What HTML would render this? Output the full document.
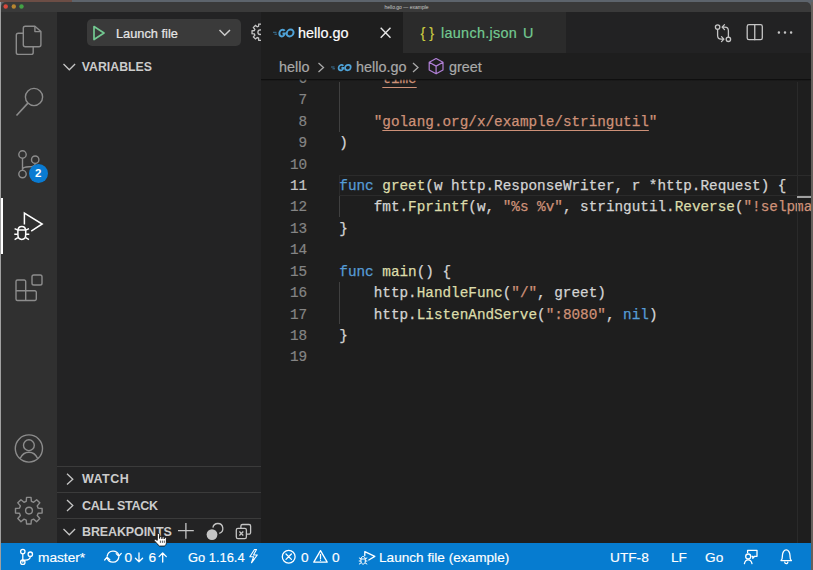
<!DOCTYPE html>
<html><head><meta charset="utf-8">
<style>
*{margin:0;padding:0;box-sizing:border-box}
html,body{width:813px;height:570px;overflow:hidden;background:#5d646c;font-family:"Liberation Sans",sans-serif;position:relative}
.a{position:absolute}
.mono{font-family:"Liberation Mono",monospace}
.code{position:absolute;left:78.3px;-webkit-text-stroke:0.25px currentColor;font-size:14.33px;line-height:21.42px;white-space:pre;color:#d4d4d4}
.ln{position:absolute;left:0;-webkit-text-stroke:0.2px currentColor;width:46.2px;text-align:right;font-size:14.33px;line-height:21.42px;color:#858585}
.k{color:#569cd6}.f{color:#dcdcaa}.s{color:#ce9178}
.u{text-decoration:underline;text-decoration-color:#ce9178;text-underline-offset:3.5px}
.hdr{position:absolute;left:82px;font-size:12.5px;font-weight:bold;color:#cccccc;line-height:14px;white-space:nowrap}
.sep{position:absolute;left:57px;width:204px;height:1px;background:#3b3b3b}
svg{position:absolute;overflow:visible}
.st{position:absolute;top:543.5px;line-height:27px;font-size:13.7px;white-space:nowrap;color:#fff;-webkit-text-stroke:0.15px currentColor}
.ui{position:absolute;font-size:14.4px;line-height:16px;white-space:nowrap;-webkit-text-stroke:0.2px currentColor}
</style></head><body>
<!-- desktop edges -->
<div class="a" style="left:0;top:0;width:72px;height:2px;background:#6c4d45"></div>
<div class="a" style="left:0;top:2px;width:1px;height:568px;background:#a0a0a0"></div>
<div class="a" style="left:811px;top:2px;width:2px;height:568px;background:#66605c"></div>

<!-- title bar -->
<div class="a" style="left:1px;top:2px;width:810px;height:10px;background:#3a3a3a;border-radius:5px 5px 0 0"></div>
<div class="a" style="left:1px;top:1.5px;width:811px;height:10px;color:#c8c8c8;font-size:5px;line-height:10px;text-align:center">hello.go — example</div>
<svg style="left:0;top:0" width="30" height="12">
 <circle cx="5.7" cy="6.5" r="2.2" fill="#d8483c"/><circle cx="13.8" cy="6.5" r="2.2" fill="#b88530"/><circle cx="21.5" cy="6.5" r="2.2" fill="#43a045"/>
</svg>

<!-- regions -->
<div class="a" style="left:1px;top:12px;width:56px;height:531px;background:#303030"></div>
<div class="a" style="left:57px;top:12px;width:204px;height:531px;background:#232324"></div>
<div class="a" style="left:261px;top:12px;width:550px;height:531px;background:#1e1e1e"></div>
<div class="a" style="left:261px;top:12px;width:550px;height:41px;background:#222223"></div>
<div class="a" style="left:261px;top:12px;width:142px;height:41px;background:#1e1e1e"></div>
<div class="a" style="left:403px;top:12px;width:163px;height:41px;background:#2b2b2b"></div>

<!-- activity bar icons -->
<svg style="left:0;top:0" width="60" height="545" fill="none" stroke="#8c8c8c" stroke-width="1.4" stroke-linejoin="round">
 <!-- files -->
 <path d="M23.3 28.3 a2 2 0 0 1 2 -2 h9.6 l6 5.3 v13.1 a2 2 0 0 1 -2 2 h-13.6 a2 2 0 0 1 -2 -2 z"/>
 <path d="M34.9 26.3 v5.3 h6"/>
 <path d="M23.3 33.3 h-5 a2 2 0 0 0 -2 2 v17.1 a2 2 0 0 0 2 2 h12.9 a2 2 0 0 0 2 -2 v-5.7"/>
 <!-- search -->
 <circle cx="34" cy="97" r="8.6"/>
 <path d="M27.9 103.1 L16.5 115.5" stroke-width="1.6"/>
 <!-- scm -->
 <circle cx="22.5" cy="154.5" r="3.7"/><circle cx="22.5" cy="174.1" r="3.7"/><circle cx="35.2" cy="159.7" r="3.7"/>
 <path d="M22.5 158.2 v12.2 M35.2 163.4 c0 2.5 -2 3.4 -6 3.4 c-4 0 -6.7 0.6 -6.7 3"/>
 <!-- extensions -->
 <path d="M16 281.5 a1.5 1.5 0 0 1 1.5 -1.5 h6.7 a1.5 1.5 0 0 1 1.5 1.5 V290.8 H34.8 a1.5 1.5 0 0 1 1.5 1.5 V299 a1.5 1.5 0 0 1 -1.5 1.5 H17.5 a1.5 1.5 0 0 1 -1.5 -1.5 Z M16 290.8 H25.7 V300.5"/><rect x="32" y="275" width="10" height="10" rx="1.8"/>
 <!-- account -->
 <circle cx="28.9" cy="448.5" r="13.6"/>
 <circle cx="28.9" cy="445.2" r="5.4"/>
 <path d="M20.3 458.2 c1.8 -4 5 -6 8.6 -6 c3.6 0 6.8 2 8.6 6"/>
 <!-- gear -->
 <circle cx="29" cy="510.6" r="3.4"/>
 <path d="M26.21 501.35 L26.57 497.39 L31.03 497.39 L31.39 501.35 L33.58 502.26 L36.64 499.71 L39.79 502.86 L37.24 505.92 L38.15 508.11 L42.11 508.47 L42.11 512.93 L38.15 513.29 L37.24 515.48 L39.79 518.54 L36.64 521.69 L33.58 519.14 L31.39 520.05 L31.03 524.01 L26.57 524.01 L26.21 520.05 L24.02 519.14 L20.96 521.69 L17.81 518.54 L20.36 515.48 L19.45 513.29 L15.49 512.93 L15.49 508.47 L19.45 508.11 L20.36 505.92 L17.81 502.86 L20.96 499.71 L24.02 502.26 Z"/>
</svg>
<div class="a" style="left:28.8px;top:163.9px;width:19px;height:19px;border-radius:50%;background:#0a7bd2;color:#fff;font-size:11.5px;font-weight:bold;text-align:center;line-height:19px">2</div>
<div class="a" style="left:1px;top:198px;width:2px;height:56px;background:#ffffff"></div>
<svg style="left:0;top:0" width="60" height="260" fill="none" stroke="#ffffff" stroke-width="1.6" stroke-linejoin="miter">
 <path d="M24.4 224.5 V213 L42.2 224 L31.2 231.2" stroke-width="1.5"/>
 <path d="M17.9 231 c0 -3.5 2 -4.6 3.9 -4.6 c1.9 0 3.9 1.1 3.9 4.6 v3.8 c0 3 -1.8 4.6 -3.9 4.6 c-2.1 0 -3.9 -1.6 -3.9 -4.6 z" stroke-width="1.5"/>
 <path d="M17.9 230 h7.8 M14.6 228.6 l3.3 1.6 M29 228.6 l-3.3 1.6 M14.3 234.2 h3.6 M29.3 234.2 h-3.6 M14.6 239.6 l3.3 -2 M29 239.6 l-3.3 -2" stroke-width="1.4"/>
</svg>

<!-- sidebar: debug toolbar -->
<div class="a" style="left:87px;top:19px;width:154px;height:26.7px;border-radius:5px;background:#3a3a3a"></div>
<svg style="left:0;top:0" width="260" height="60" fill="none" stroke="#73c991" stroke-width="1.7" stroke-linejoin="round">
 <path d="M94 26.5 L104 33 L94 39.5 Z"/>
</svg>
<div class="ui" style="left:116px;top:25.5px;color:#e6e6e6;font-size:12.8px">Launch file</div>
<svg style="left:0;top:0" width="260" height="60" fill="none" stroke="#cccccc" stroke-width="1.5">
 <path d="M219.5 30 L224.7 35.3 L230 30"/>
</svg>

<div class="a" style="left:0;top:0;width:261px;height:60px;overflow:hidden"><svg style="left:0;top:0" width="260" height="60" fill="none" stroke="#c5c5c5" stroke-width="1.3">
 <path d="M258.52 26.34 L258.76 24.03 L261.64 24.03 L261.88 26.34 L263.16 26.86 L264.96 25.40 L267.00 27.44 L265.54 29.24 L266.06 30.52 L268.37 30.76 L268.37 33.64 L266.06 33.88 L265.54 35.16 L267.00 36.96 L264.96 39.00 L263.16 37.54 L261.88 38.06 L261.64 40.37 L258.76 40.37 L258.52 38.06 L257.24 37.54 L255.44 39.00 L253.40 36.96 L254.86 35.16 L254.34 33.88 L252.03 33.64 L252.03 30.76 L254.34 30.52 L254.86 29.24 L253.40 27.44 L255.44 25.40 L257.24 26.86 Z"/><circle cx="260.2" cy="32.2" r="2.3"/>
</svg></div>
<svg style="left:0;top:0" width="813" height="60" fill="none" stroke="#c5c5c5" stroke-width="1.3" stroke-linecap="round" stroke-linejoin="round">
 <circle cx="717.6" cy="27.1" r="2.2"/><circle cx="728.4" cy="39.3" r="2.2"/>
 <path d="M717.6 29.3 V35.5 c0 2 1.5 3.6 3.5 3.6 h2.6 M721.5 36.6 l2.4 2.5 l-2.4 2.5"/>
 <path d="M728.4 37.1 V30.7 c0 -2 -1.5 -3.6 -3.5 -3.6 h-2.6 M724.5 24.6 l-2.4 2.5 l2.4 2.5"/>
 <rect x="747.2" y="24.6" width="15.1" height="15.1" rx="1.8"/><path d="M754.75 24.6 V39.7"/>
 <circle cx="778.9" cy="32.6" r="0.6" fill="#c5c5c5"/><circle cx="785" cy="32.6" r="0.6" fill="#c5c5c5"/><circle cx="791.1" cy="32.6" r="0.6" fill="#c5c5c5"/>
</svg>
<svg style="left:0;top:0" width="260" height="545" fill="none" stroke="#c5c5c5" stroke-width="1.3">
 <path d="M178 530.7 H193.8 M185.9 523 V538.8"/>
 <circle cx="212" cy="534.6" r="5.4" fill="#c5c5c5" stroke="none"/>
 <path d="M212.9 527.6 A5 5 0 1 1 219.2 533.3"/>
 <path d="M240.9 528.3 V526.1 a1.6 1.6 0 0 1 1.6 -1.6 h6.5 a1.6 1.6 0 0 1 1.6 1.6 v6.5 a1.6 1.6 0 0 1 -1.6 1.6 h-2.6"/>
 <rect x="236.3" y="528.4" width="10.1" height="10.2" rx="1.6"/>
 <path d="M239.4 531.5 L243.3 535.5 M243.3 531.5 L239.4 535.5"/>
</svg>
<!-- sidebar sections -->
<svg style="left:0;top:0" width="260" height="545" fill="none" stroke="#c5c5c5" stroke-width="1.3">
 <path d="M63.5 64 L69.3 69.8 L75.1 64"/>
 <path d="M67 473.8 L72.8 479.2 L67 484.6"/>
 <path d="M67 500 L72.8 505.5 L67 511"/>
 <path d="M63.5 529 L69.3 534.8 L75.1 529"/>
</svg>
<div class="hdr" style="top:60.3px;font-size:12.3px;left:81.8px">VARIABLES</div>
<div class="sep" style="top:466px"></div>
<div class="hdr" style="top:472px;letter-spacing:0.45px">WATCH</div>
<div class="sep" style="top:492px"></div>
<div class="hdr" style="top:498.5px;letter-spacing:-0.3px">CALL STACK</div>
<div class="sep" style="top:518px"></div>
<div class="hdr" style="top:524.5px;letter-spacing:-0.12px">BREAKPOINTS</div>


<!-- tabs -->
<div class="ui" style="left:298px;top:25px;color:#ffffff">hello.go</div>
<svg style="left:0;top:0" width="400" height="60" fill="none" stroke="#e6e6e6" stroke-width="1.4">
 <path d="M380.7 27.7 L390.5 37.7 M390.5 27.7 L380.7 37.7"/>
</svg>
<div class="ui" style="left:420.5px;top:24.5px;color:#cbcb41;-webkit-text-stroke:0.15px currentColor">{ }</div>
<div class="ui" style="left:441px;top:25px;color:#73c991;letter-spacing:0.3px">launch.json</div>
<div class="ui" style="left:523px;top:25px;color:#73c991">U</div>

<!-- breadcrumbs -->
<div class="ui" style="left:279px;top:59px;color:#a9a9a9">hello</div>
<div class="ui" style="left:356px;top:59px;color:#a9a9a9">hello.go</div>
<div class="ui" style="left:449px;top:59px;color:#a9a9a9">greet</div>
<svg style="left:0;top:0" width="500" height="80" fill="none" stroke="#a9a9a9" stroke-width="1.3">
 <path d="M318.5 63 L323.5 67.5 L318.5 72"/>
 <path d="M413 63 L418 67.5 L413 72"/>
</svg>

<!-- editor -->
<div class="a" style="left:261px;top:79px;width:550px;height:464px;overflow:hidden">
<div class="a" style="left:77.7px;top:96px;width:480px;height:20.6px;border:1px solid #2b2b2b"></div>
<div class="ln mono" style="top:-10.10px">6</div>
<div class="code mono" style="top:-10.10px">    <span class="s">"<span class="u">time</span>"</span></div>
<div class="ln mono" style="top:11.32px">7</div>
<div class="ln mono" style="top:32.74px">8</div>
<div class="code mono" style="top:32.74px">    <span class="s">"<span class="u">golang.org/x/example/stringutil</span>"</span></div>
<div class="ln mono" style="top:54.16px">9</div>
<div class="code mono" style="top:54.16px">)</div>
<div class="ln mono" style="top:75.58px">10</div>
<div class="ln mono" style="top:97.00px;color:#c6c6c6">11</div>
<div class="code mono" style="top:97.00px"><span class="k">func</span> <span class="f">greet</span>(w http.ResponseWriter, r *http.Request) {</div>
<div class="ln mono" style="top:118.42px">12</div>
<div class="code mono" style="top:118.42px">    fmt.<span class="f">Fprintf</span>(w, <span class="s">"%s %v"</span>, stringutil.<span class="f">Reverse</span>(<span class="s">"!selpmaxe ,olleH"</span>))</div>
<div class="ln mono" style="top:139.84px">13</div>
<div class="code mono" style="top:139.84px">}</div>
<div class="ln mono" style="top:161.26px">14</div>
<div class="ln mono" style="top:182.68px">15</div>
<div class="code mono" style="top:182.68px"><span class="k">func</span> <span class="f">main</span>() {</div>
<div class="ln mono" style="top:204.10px">16</div>
<div class="code mono" style="top:204.10px">    http.<span class="f">HandleFunc</span>(<span class="s">"/"</span>, greet)</div>
<div class="ln mono" style="top:225.52px">17</div>
<div class="code mono" style="top:225.52px">    http.<span class="f">ListenAndServe</span>(<span class="s">":8080"</span>, <span class="k">nil</span>)</div>
<div class="ln mono" style="top:246.94px">18</div>
<div class="code mono" style="top:246.94px">}</div>
<div class="ln mono" style="top:268.36px">19</div>
</div>

<!-- editor overlays -->
<div class="a" style="left:261px;top:78.5px;width:550px;height:2px;background:linear-gradient(rgba(8,8,8,0.9),rgba(30,30,30,0))"></div>
<div class="a" style="left:338.8px;top:82px;width:1px;height:50px;background:#404040"></div>
<div class="a" style="left:338.8px;top:196px;width:1px;height:21.4px;background:#404040"></div>
<div class="a" style="left:338.8px;top:281.6px;width:1px;height:42.8px;background:#404040"></div>
<div class="a" style="left:796.5px;top:82px;width:1px;height:461px;background:#2a2a2a"></div>
<div class="a" style="left:797px;top:196px;width:14px;height:2px;background:#a0a0a0"></div>
<!-- go icons -->
<svg style="left:0;top:0" width="813" height="90" fill="none" stroke="#4fa3d8" stroke-width="1.7">
 <g transform="translate(286,33) skewX(-8) translate(-286,-33)" stroke-width="2">
  <path d="M284.34 30.81 A2.8 3.4 0 1 0 285.00 33.41 H282.50"/>
  <ellipse cx="290.1" cy="33" rx="3.4" ry="3.4"/>
 </g>
 <path d="M273 32.3 h3.5 M274.5 34.2 h2.5" stroke-width="0.9" stroke="#3f7fa8"/>
 <g transform="translate(344,67.6) skewX(-8) translate(-344,-67.6)" stroke-width="1.7">
  <path d="M343.02 65.86 A2.5 2.7 0 1 0 343.60 67.92 H341.40"/>
  <ellipse cx="347.9" cy="67.6" rx="2.8" ry="2.7"/>
 </g>
 <path d="M331 67 h3.5 M332.5 68.8 h2.5" stroke-width="0.9" stroke="#3f7fa8"/>
</svg>
<svg style="left:0;top:0" width="813" height="90" fill="none" stroke="#b180d7" stroke-width="1.2" stroke-linejoin="round">
 <path d="M436.1 58.5 L443 62.3 V70 L436.1 73.8 L429.2 70 V62.3 Z M429.2 62.3 L436.1 66.1 L443 62.3 M436.1 66.1 V73.8"/>
</svg>
<!-- status bar -->
<div class="a" style="left:1px;top:543px;width:810px;height:27px;background:#067cd0"></div>
<svg style="left:0;top:0" width="813" height="570" fill="none" stroke="#ffffff" stroke-width="1.3" stroke-linecap="round" stroke-linejoin="round">
 <circle cx="22.8" cy="551.6" r="2.2"/><circle cx="22.8" cy="562.2" r="2.2"/><circle cx="30.3" cy="554.2" r="2.2"/>
 <path d="M22.8 553.8 V560 M30.3 556.4 c0 3 -2.5 3.6 -5 3.8 c-1.5 0.1 -2.5 0.6 -2.5 1.8"/>
 <path d="M107.2 556 A6 6 0 0 1 118.8 555.3 M118.8 557.4 A6 6 0 0 1 107.2 558"/>
 <path d="M116.2 553.6 L118.9 556.2 L121.3 553.4 M109.8 559.8 L107.1 557.2 L104.7 560"/>
 <path d="M139 552.8 V561.8 M135.4 558.2 L139 561.8 L142.6 558.2"/>
 <path d="M162.7 562 V553 M159.1 556.6 L162.7 553 L166.3 556.6"/>
 <path d="M254.5 549.5 L249.8 556.8 H253.6 L251.5 562.8 L257.3 555 H253.5 L256.5 549.5 Z" stroke-width="1.1"/>
 <circle cx="288.7" cy="556.7" r="6.4"/><path d="M286 554 L291.4 559.4 M291.4 554 L286 559.4"/>
 <path d="M320.5 550.6 L327.2 562.2 H313.8 Z M320.5 554.5 V558.5 M320.5 560.2 V560.3"/>
 <path d="M364.8 551.6 V555.6 M364.8 551.6 L374.8 556.4 L368.8 560"/>
 <path d="M360.9 559.5 c0 -2.3 1.2 -3 2.2 -3 c1 0 2.2 0.7 2.2 3 v1.6 c0 1.8 -1 3 -2.2 3 c-1.2 0 -2.2 -1.2 -2.2 -3 z M360.9 559 h4.4 M359.3 558 l1.6 0.8 M366.9 558 l-1.6 0.8 M359.2 561 h1.7 M367 561 h-1.7 M359.3 564 l1.6 -1 M366.9 564 l-1.6 -1" stroke-width="1"/>
 <path d="M747.6 552.5 V550.3 H757 V556.3 H754.6 L752.8 558.3 V556.3 H752"/>
 <circle cx="748.2" cy="556.5" r="2.5"/><path d="M744.4 563.6 c0.6 -2.6 2 -3.8 3.8 -3.8 c1.8 0 3.2 1.2 3.8 3.8"/>
 <path d="M781 560.6 c1.5 -1.2 1.4 -2.8 1.4 -5 c0 -3 1.6 -5.8 3.8 -5.8 c2.2 0 3.8 2.8 3.8 5.8 c0 2.2 -0.1 3.8 1.4 5 Z M784.8 562.2 a1.5 1.5 0 0 0 3 0"/>
</svg>
<div class="st" style="left:38px">master*</div>
<div class="st" style="left:124.5px">0</div><div class="st" style="left:148.6px">6</div>
<div class="st" style="left:188px;font-size:12.9px">Go 1.16.4</div>
<div class="st" style="left:301px">0</div>
<div class="st" style="left:332px">0</div>
<div class="st" style="left:379px;font-size:13.63px">Launch file (example)</div>
<div class="st" style="left:610px">UTF-8</div>
<div class="st" style="left:671px">LF</div>
<div class="st" style="left:705px">Go</div>
<svg style="left:0;top:0" width="260" height="570" fill="#ffffff" stroke="#111111" stroke-width="0.9" stroke-linejoin="round">
 <path d="M157.3 540.3 V534.6 a1.15 1.15 0 0 1 2.3 0 V538.5 V537.4 a1.15 1.15 0 0 1 2.3 0 V538.8 V537.8 a1.15 1.15 0 0 1 2.3 0 V539 V538.4 a1.1 1.1 0 0 1 2.2 0 V542.5 c0 1.6 -0.8 3 -2 3.6 H159.5 c-1 -0.5 -1.5 -1.3 -2.3 -2.3 L154.5 540.9 a0.95 0.95 0 0 1 1.4 -1.3 Z"/>
 <path d="M160.4 540.6 v2.3 M162.4 540.6 v2.3 M164.3 540.6 v2.3" stroke-width="0.7"/>
</svg>
</body></html>
